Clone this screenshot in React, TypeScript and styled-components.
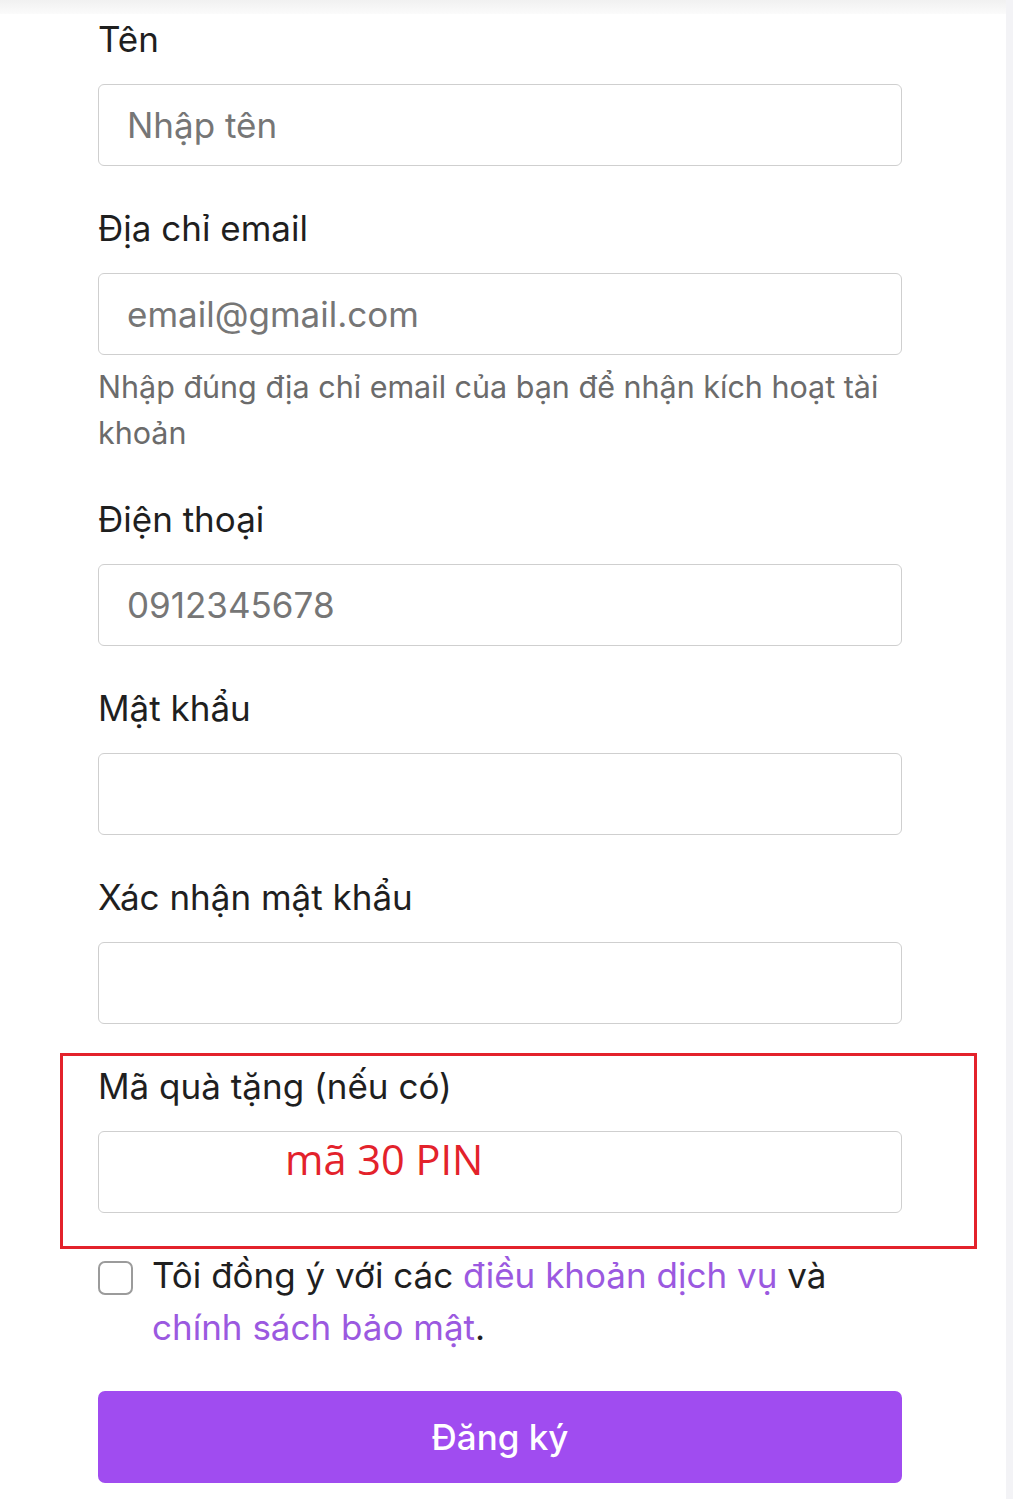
import React from 'react';
import styled, { createGlobalStyle } from 'styled-components';

const GlobalStyle = createGlobalStyle`
    body {
        margin: 0;
        background: #ffffff;
        font-family: Inter, "Noto Sans", sans-serif;
        color: #212121;
    }
`;

const Page = styled.div`
    display: flex;
    min-height: 1499px;
`;

const Main = styled.div`
    flex: 1;
    display: flex;
    flex-direction: column;
`;

const TopShade = styled.div`
    height: 14px;
    background: linear-gradient(#f1f1f1, #fbfbfb);
`;

const RightRail = styled.div`
    width: 7px;
    background: #f3f3f6;
`;

const Form = styled.form`
    width: 804px;
    margin-left: 98px;
    display: flex;
    flex-direction: column;
`;

const Field = styled.div`
    display: flex;
    flex-direction: column;
    margin-bottom: 37px;
`;

const Label = styled.label`
    font-size: 35px;
    line-height: 50px;
    margin-bottom: 20px;
    color: #1f1f1f;
`;

const Input = styled.input`
    box-sizing: border-box;
    height: 82px;
    width: 100%;
    border: 1.5px solid #cfcfcf;
    border-radius: 6px;
    padding: 0 28px;
    font-family: Inter, "Noto Sans", sans-serif;
    font-size: 35px;
    color: #212121;
    outline: none;
    &::placeholder {
        color: #767676;
    }
`;

const Help = styled.div`
    font-size: 30.5px;
    line-height: 46px;
    color: #6b6b6b;
    margin-top: 9px;
    margin-bottom: 1px;
`;

const Highlight = styled.div`
    margin: -8px -75px 0 -38px;
    padding: 5px 72px 33px 35px;
    border: 3px solid #e3222b;
    display: flex;
    flex-direction: column;
`;

const InputWrap = styled.div`
    position: relative;
`;

const Note = styled.span`
    position: absolute;
    left: 187px;
    top: 0;
    font-family: "Open Sans", sans-serif;
    font-size: 41.5px;
    line-height: normal;
    color: #e3222b;
    pointer-events: none;
`;

const Agree = styled.div`
    display: flex;
    align-items: flex-start;
    gap: 19px;
`;

const Box = styled.span`
    flex: none;
    box-sizing: border-box;
    width: 35px;
    height: 34px;
    margin-top: 12px;
    border: 2px solid #9b9b9b;
    border-radius: 7px;
`;

const AgreeText = styled.div`
    font-size: 35px;
    line-height: 52px;
    color: #1f1f1f;
`;

const Link = styled.a`
    color: #9b59e0;
    text-decoration: none;
`;

const Submit = styled.button`
    margin-top: 38px;
    height: 92px;
    width: 100%;
    border: none;
    border-radius: 7px;
    background: #a04cf0;
    color: #ffffff;
    font-family: Inter, "Noto Sans", sans-serif;
    font-size: 35px;
    font-weight: 500;
`;

const fields = [
    { label: 'Tên', placeholder: 'Nhập tên' },
    { label: 'Địa chỉ email', placeholder: 'email@gmail.com', help: 'Nhập đúng địa chỉ email của bạn để nhận kích hoạt tài khoản' },
    { label: 'Điện thoại', placeholder: '0912345678' },
    { label: 'Mật khẩu', type: 'password' },
    { label: 'Xác nhận mật khẩu', type: 'password' },
];

const App = () => (
    <Page>
        <GlobalStyle />
        <Main>
            <TopShade />
            <Form onSubmit={e => e.preventDefault()}>
                {fields.map(f => (
                    <Field key={f.label}>
                        <Label>{f.label}</Label>
                        <Input type={f.type || 'text'} placeholder={f.placeholder} />
                        {f.help && <Help>{f.help}</Help>}
                    </Field>
                ))}
                <Highlight>
                    <Label>Mã quà tặng (nếu có)</Label>
                    <InputWrap>
                        <Input type="text" />
                        <Note>mã 30 PIN</Note>
                    </InputWrap>
                </Highlight>
                <Agree>
                    <Box />
                    <AgreeText>
                        Tôi đồng ý với các <Link href="#">điều khoản dịch vụ</Link> và{' '}
                        <Link href="#">chính sách bảo mật</Link>.
                    </AgreeText>
                </Agree>
                <Submit type="submit">Đăng ký</Submit>
            </Form>
        </Main>
        <RightRail />
    </Page>
);

export default App;
